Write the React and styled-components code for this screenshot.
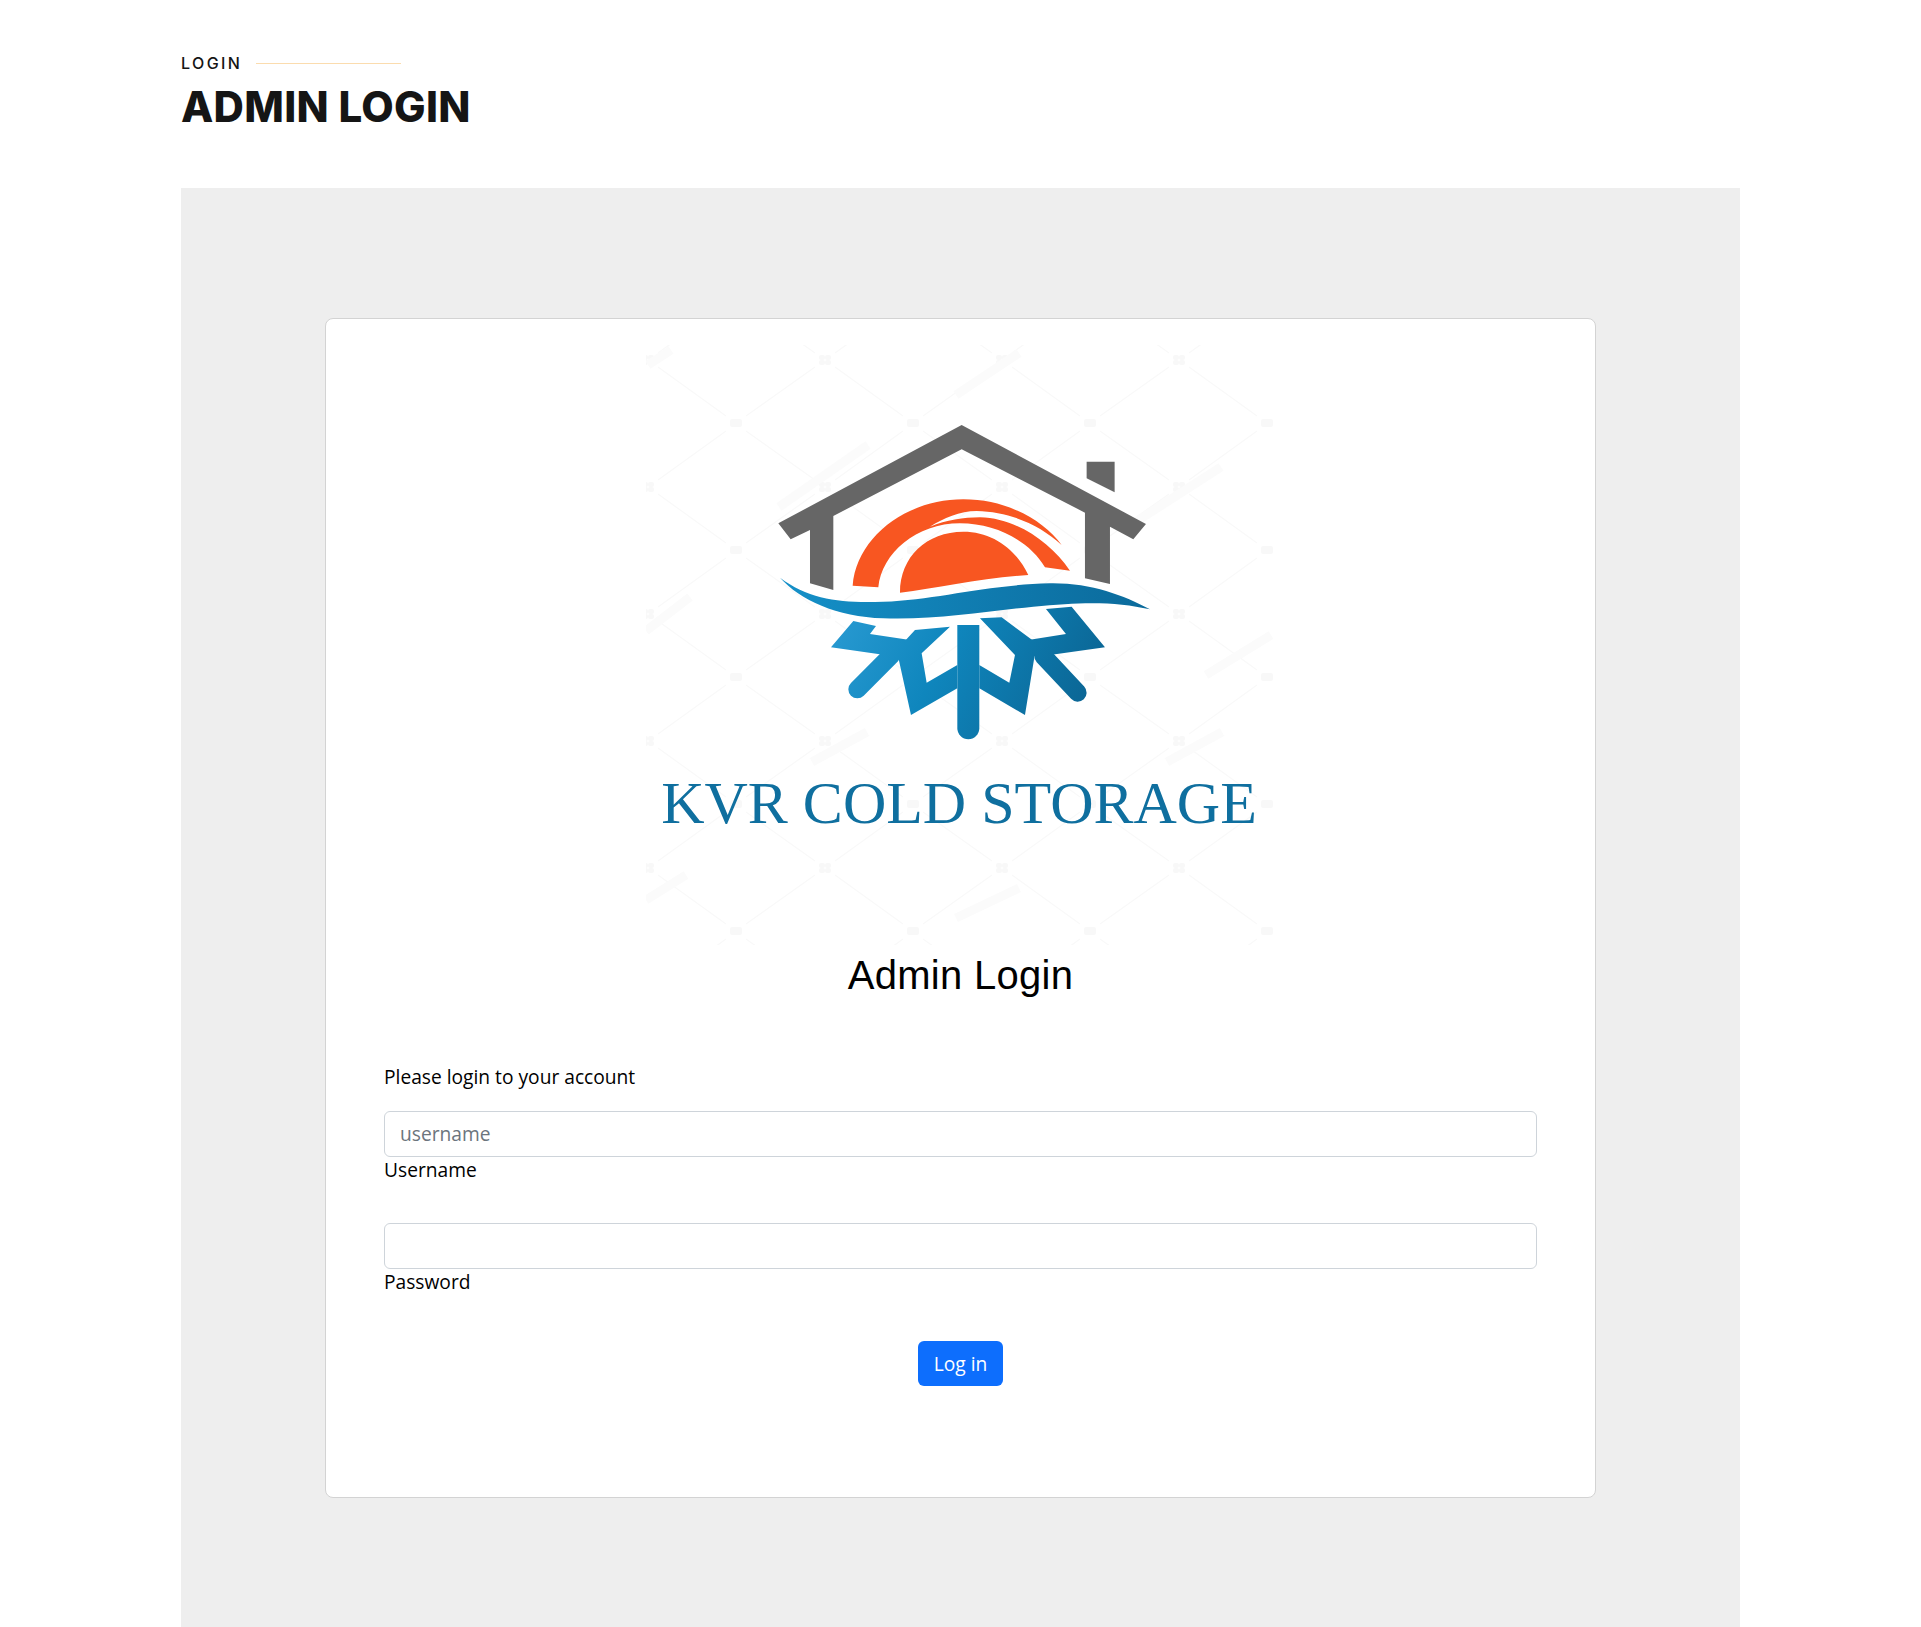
import React from 'react';
import styled, { createGlobalStyle } from 'styled-components';

const GlobalStyle = createGlobalStyle`
  * { box-sizing: border-box; }
  html, body { margin: 0; padding: 0; background: #fff; }
  body { font-family: "Open Sans", "Liberation Sans", sans-serif; color: #000; }
`;

// faint stock photo watermark strips behind the logo
const STRIPS = [
  'M133 162L222 100',
  'M310 50L373 8',
  'M491 176L575 122',
  'M0 286L44 252',
  'M166 417L221 387',
  'M521 417L576 387',
  'M310 573L373 543',
  'M0 555L40 530',
  'M2 20L25 5',
  'M560 330L625 290',
];

const LogoMark = () => (
  <svg width="630" height="600" viewBox="0 0 630 600">
    <defs>
      <linearGradient id="ice" gradientUnits="userSpaceOnUse" x1="243" y1="590" x2="1065" y2="985">
        <stop offset="0" stopColor="#2a9bd3" />
        <stop offset="0.4" stopColor="#0f86bd" />
        <stop offset="1" stopColor="#0a5f8c" />
      </linearGradient>
      <linearGradient id="wave" gradientUnits="userSpaceOnUse" x1="90" y1="560" x2="1200" y2="560">
        <stop offset="0" stopColor="#1590c8" />
        <stop offset="1" stopColor="#0b6a9b" />
      </linearGradient>
      <pattern id="mesh" x="2" y="15" width="177" height="127" patternUnits="userSpaceOnUse">
        <path d="M10 7L78 56M98 71L167 120M167 7L98 56M78 71L10 120" stroke="#f9f9f9" strokeWidth="1.2" fill="none" />
        <rect x="82" y="59" width="12" height="8" rx="2" fill="#f8f8f8" />
        <rect x="0" y="0" width="6" height="5" rx="2" fill="#f8f8f8" />
        <rect x="171" y="0" width="6" height="5" rx="2" fill="#f8f8f8" />
        <rect x="0" y="122" width="6" height="5" rx="2" fill="#f8f8f8" />
        <rect x="171" y="122" width="6" height="5" rx="2" fill="#f8f8f8" />
      </pattern>
    </defs>
    <rect width="630" height="600" fill="url(#mesh)" />
    <g stroke="#fbfbfb" strokeWidth="9" fill="none">
      {STRIPS.map(d => <path key={d} d={d} />)}
    </g>
    <g transform="translate(104 65) scale(0.3333)">
      <path fill="#666666" d="M635 45L1188 342L1150 388L1080 350V522L1005 505V308L635 118L250 318V540L180 520V360L122 388L85 340Z" />
      <path fill="#666666" d="M1010 155H1094V247L1010 205Z" />
      <path fill="#f85621" d="M450 548C450 440 530 365 640 365C730 365 800 420 835 495C700 503 560 535 450 548Z" />
      <path fill="#f85621" d="M308 527C320 380 470 268 640 268C770 268 880 330 935 405C870 345 780 305 680 303C630 303 580 325 540 350C590 330 640 322 690 322C800 325 900 395 960 482L885 472C840 395 740 340 630 340C500 340 395 430 385 532Z" />
      <path fill="url(#wave)" d="M90 503C180 570 280 580 400 575C560 570 700 525 900 520C1020 518 1120 555 1200 598C1100 575 1000 575 850 590C700 605 560 630 400 625C260 620 150 570 90 503Z" />
      <path fill="url(#ice)" d="M622 645H688V955A33 33 0 0 1 622 955Z" />
      <path fill="url(#ice)" d="M622 765L530 818L515 730L600 650L495 660L440 720L483 915L622 835Z" />
      <path fill="url(#ice)" d="M688 765L778 818L795 735L690 625L755 622L860 700L825 915L688 835Z" />
      <path fill="url(#ice)" d="M310 633L378 648L360 672L480 690L500 745L405 735L243 712Z" />
      <path fill="url(#ice)" d="M888 597L965 590L1065 712L900 735L820 740L835 690L948 672Z" />
      <path stroke="url(#ice)" strokeWidth="54" strokeLinecap="round" fill="none" d="M425 735L322 838" />
      <path stroke="url(#ice)" strokeWidth="54" strokeLinecap="round" fill="none" d="M880 738L983 848" />
    </g>
    <LogoText x="313" y="478" textAnchor="middle">KVR COLD STORAGE</LogoText>
  </svg>
);

const App = () => (
  <>
    <GlobalStyle />
    <Page>
      <Heading>
        <Eyebrow>
          <EyebrowText>Login</EyebrowText>
          <EyebrowLine />
        </Eyebrow>
        <Title>Admin Login</Title>
      </Heading>
      <Panel>
        <Card>
          <Logo>
            <LogoMark />
          </Logo>
          <CardTitle>Admin Login</CardTitle>
          <Form onSubmit={e => e.preventDefault()}>
            <Hint>Please login to your account</Hint>
            <Field>
              <Input type="text" placeholder="username" />
              <Label>Username</Label>
            </Field>
            <Field>
              <Input type="password" />
              <Label>Password</Label>
            </Field>
            <Actions>
              <SubmitButton type="submit">Log in</SubmitButton>
            </Actions>
          </Form>
        </Card>
      </Panel>
    </Page>
  </>
);

const Page = styled.div`
  width: 1559px;
  margin: 0 auto;
  padding-top: 52px;
`;

const Heading = styled.div`
  height: 136px;
`;

const Eyebrow = styled.div`
  display: flex;
  align-items: center;
  gap: 14px;
  height: 22px;
`;

const EyebrowText = styled.span`
  font-family: "Inter", sans-serif;
  font-size: 16px;
  font-weight: 500;
  letter-spacing: 2.4px;
  text-transform: uppercase;
  color: #151515;
`;

const EyebrowLine = styled.span`
  display: block;
  width: 145px;
  height: 1px;
  background: #fbdcae;
`;

const Title = styled.h1`
  margin: 5px 0 0;
  font-family: "Inter", sans-serif;
  font-size: 42px;
  font-weight: 800;
  line-height: 56px;
  letter-spacing: 0.3px;
  text-transform: uppercase;
  color: #151515;
`;

const Panel = styled.section`
  background: #eeeeee;
  padding: 130px 144px;
`;

const Card = styled.div`
  background: #fff;
  border: 1px solid #d3d3d3;
  border-radius: 8px;
  padding: 26px 58px 0;
  height: 1180px;
`;

const Logo = styled.div`
  display: flex;
  justify-content: center;
  height: 600px;
`;

const LogoText = styled.text`
  font-family: "Liberation Serif", serif;
  font-size: 60px;
  fill: #0f6f9f;
`;

const CardTitle = styled.h2`
  margin: 6px 0 0;
  text-align: center;
  font-family: "Liberation Sans", sans-serif;
  font-size: 40px;
  font-weight: 400;
  line-height: 48px;
  letter-spacing: 0.3px;
  color: #000;
`;

const Form = styled.form`
  margin-top: 63px;
`;

const Hint = styled.p`
  margin: 0 0 19px;
  font-size: 19.2px;
  line-height: 30px;
`;

const Field = styled.div`
  margin-bottom: 40.4px;
`;

const Input = styled.input`
  display: block;
  width: 100%;
  height: 45.6px;
  padding: 0 15px;
  border: 1px solid #ced4da;
  border-radius: 6px;
  background: #fff;
  font-family: inherit;
  font-size: 19.2px;
  color: #212529;

  &::placeholder {
    color: #6c757d;
  }
`;

const Label = styled.label`
  display: block;
  font-size: 19.2px;
  line-height: 26px;
`;

const Actions = styled.div`
  display: flex;
  justify-content: center;
  margin-top: 46.4px;
`;

const SubmitButton = styled.button`
  width: 85px;
  height: 45px;
  padding: 0;
  border: 0;
  border-radius: 6px;
  background: #0d6efd;
  color: #fff;
  font-family: "Open Sans", sans-serif;
  font-size: 19.2px;
`;

export default App;
